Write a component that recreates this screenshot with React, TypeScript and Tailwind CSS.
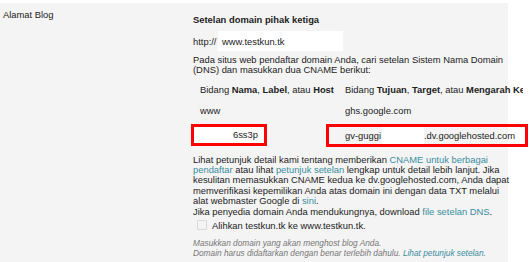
import React from "react";

export default function App() {
  const link = "text-[#3a8c9e]";
  return (
    <div className="w-[530px] h-[262px] bg-white pt-[3px] overflow-hidden text-[#222] [font-family:'Liberation_Sans',Arial,sans-serif] text-[9.4px] leading-[11px]">
      <div className="w-[508px] h-[259px] bg-[#f4f4f4] flex">
        <div className="w-[193px] shrink-0 pl-[3px] pt-[6px]">Alamat Blog</div>
        <div className="flex flex-col pt-[11px] min-w-0">
          <div className="font-bold h-[11px] whitespace-nowrap">Setelan domain pihak ketiga</div>
          <div className="flex items-center mt-[6px] h-[20px]">
            <span className="w-[25px]">http://</span>
            <div className="w-[125px] h-[20px] bg-white flex items-center pl-[4px]">www.testkun.tk</div>
          </div>
          <div className="mt-[4px] leading-[10.3px] whitespace-nowrap">
            Pada situs web pendaftar domain Anda, cari setelan Sistem Nama Domain
            <br />
            (DNS) dan masukkan dua CNAME berikut:
          </div>
          <div className="flex mt-[8px] h-[11px] whitespace-nowrap">
            <div className="w-[152px] shrink-0 pl-[7px]">
              Bidang <b>Nama</b>, <b>Label</b>, atau <b>Host</b>
            </div>
            <div className="w-[178px] shrink-0 overflow-hidden">
              Bidang <b>Tujuan</b>, <b>Target</b>, atau <b>Mengarah Ke</b>
            </div>
          </div>
          <div className="flex mt-[10px] h-[11px]">
            <div className="w-[152px] shrink-0 pl-[7px]">www</div>
            <div>ghs.google.com</div>
          </div>
          <div className="flex mt-[8px] ml-[-2px] h-[23px] whitespace-nowrap">
            <div className="w-[76px] shrink-0 h-[22px] border-[3px] border-[#ff0000] bg-white flex items-center justify-end pr-[6px]">
              <span>6ss3p</span>
            </div>
            <div className="ml-[59px] shrink-0 w-[202px] h-[23px] border-[3px] border-[#ff0000] flex items-center bg-[linear-gradient(to_right,#f4f4f4_179px,#ffffff_179px)]">
              <span className="pl-[16px] w-[53px] shrink-0">gv-guggi</span>
              <span className="w-[42px] shrink-0 h-[17px] bg-white" />
              <span>.dv.googlehosted.com</span>
            </div>
          </div>
          <div className="mt-[8px] leading-[10.4px] whitespace-nowrap">
            Lihat petunjuk detail kami tentang memberikan <span className={link}>CNAME untuk berbagai</span>
            <br />
            <span className={link}>pendaftar</span> atau lihat <span className={link}>petunjuk setelan</span> lengkap untuk detail lebih lanjut. Jika
            <br />
            kesulitan memasukkan CNAME kedua ke dv.googlehosted.com, Anda dapat
            <br />
            memverifikasi kepemilikan Anda atas domain ini dengan data TXT melalui
            <br />
            alat webmaster Google di <span className={link}>sini</span>.
            <br />
            Jika penyedia domain Anda mendukungnya, download <span className={link}>file setelan DNS</span>.
          </div>
          <div className="flex items-center mt-[2px] h-[12px] pl-[4px] whitespace-nowrap">
            <span className="w-[10px] h-[10px] shrink-0 border border-[#d8d8d8] bg-[#f4f4f4] rounded-[1px] mr-[5px]" />
            <span>Alihkan testkun.tk ke www.testkun.tk.</span>
          </div>
          <div className="mt-[7px] italic text-[8.3px] leading-[10px] text-[#777] whitespace-nowrap">
            Masukkan domain yang akan menghost blog Anda.
            <br />
            Domain harus didaftarkan dengan benar terlebih dahulu. <span className={link}>Lihat petunjuk setelan</span>.
          </div>
        </div>
      </div>
    </div>
  );
}
